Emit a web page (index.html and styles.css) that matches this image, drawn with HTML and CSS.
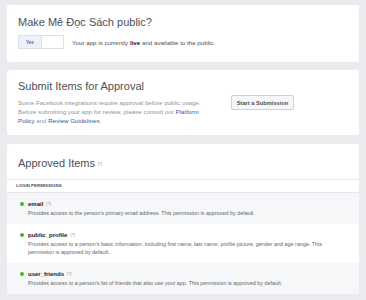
FILE: index.html
```html
<!DOCTYPE html>
<html lang="en">
<head>
    <meta charset="UTF-8">
    <title>App Review</title>
    <link rel="stylesheet" href="styles.css">
</head>
<body>
    <div class="page">
        <div class="card public">
            <h1 class="title">Make Mê Đọc Sách public?</h1>
            <div class="status">
                <div class="toggle">
                    <span class="yes">Yes</span>
                    <span class="no"></span>
                </div>
                <p class="note">Your app is currently <b>live</b> and available to the public.</p>
            </div>
        </div>

        <div class="card submit">
            <div class="submit-text">
                <h1 class="title">Submit Items for Approval</h1>
                <p class="desc">Some Facebook integrations require approval before public usage.<br>
                    Before submitting your app for review, please consult our <a href="#">Platform</a><br>
                    <a href="#">Policy</a> and <a href="#">Review Guidelines</a>.</p>
            </div>
            <button class="start">Start a Submission</button>
        </div>

        <div class="card approved">
            <div class="approved-head">
                <h1 class="title">Approved Items <span class="help">[?]</span></h1>
            </div>
            <div class="section">LOGIN PERMISSIONS</div>
            <div class="item grey">
                <div class="name"><span class="dot"></span>email <span class="help">[?]</span></div>
                <p class="item-desc">Provides access to the person's primary email address. This permission is approved by default.</p>
            </div>
            <div class="item">
                <div class="name"><span class="dot"></span>public_profile <span class="help">[?]</span></div>
                <p class="item-desc">Provides access to a person's basic information, including first name, last name, profile picture, gender and age range. This<br>
                    permission is approved by default.</p>
            </div>
            <div class="item grey">
                <div class="name"><span class="dot"></span>user_friends <span class="help">[?]</span></div>
                <p class="item-desc">Provides access to a person's list of friends that also use your app. This permission is approved by default.</p>
            </div>
        </div>
    </div>
</body>
</html>
```

FILE: styles.css
```css
body{
    margin:0;
    padding:0;
    background-color: #e9ebee;
    font-family: "Liberation Sans", Arial, sans-serif;
    color: #4b4f56;
}

.page{
    padding:5px 7px;
    display: flex;
    flex-direction: column;
}

.card{
    background-color: white;
    border-radius: 2px;
}

.title{
    margin:0;
    font-size: 11px;
    font-weight: normal;
    line-height: 13px;
    color: #4b4f56;
}

.public{
    padding:11px 11px 13px;
}
.status{
    display: flex;
    align-items: center;
    gap:8px;
    margin-top:6px;
}
.toggle{
    display: flex;
    box-sizing: border-box;
    width:46px;
    height:14px;
    border:1px solid #dddfe2;
}
.yes{
    width:22px;
    background-color: #edf1f8;
    color: #4267b2;
    font-size: 4.5px;
    font-weight: bold;
    display: flex;
    align-items: center;
    justify-content: center;
    border-right:1px solid #dddfe2;
}
.note{
    margin:0;
    font-size: 6.2px;
    color: #4b4f56;
}
.note b{
    color: #1d2129;
}

.submit{
    margin-top:8px;
    padding:10px 11px 10px;
    display: flex;
    align-items: center;
}
.submit-text{
    width:204px;
}
.desc{
    margin:5px 0 0;
    font-size: 6.2px;
    line-height: 9px;
    color: #90949c;
    white-space: nowrap;
}
.desc a{
    color: #365899;
    text-decoration: none;
}
.start{
    margin-left:9px;
    width:63px;
    height:15px;
    padding:0;
    background-color: #f6f7f9;
    border:1px solid #ced0d4;
    border-radius: 2px;
    font-family: "Liberation Sans", Arial, sans-serif;
    font-size: 5.7px;
    font-weight: bold;
    color: #4b4f56;
}

.approved{
    margin-top:9px;
    overflow: hidden;
}
.approved-head{
    padding:13px 11px 8px;
    border-bottom:1px solid #e5e6e9;
}
.help{
    font-size: 3.6px;
    font-weight: normal;
    color: #90949c;
    vertical-align: middle;
}
.section{
    padding:0 9px;
    height:12px;
    line-height: 12px;
    font-size: 4.4px;
    font-weight: bold;
    color: #4b4f56;
    border-bottom:1px solid #e5e6e9;
}
.item{
    padding:7px 20px 7px 13px;
}
.item.grey{
    background-color: #f6f7f9;
}
.name{
    display: flex;
    align-items: center;
    gap:3px;
    font-size: 6px;
    font-weight: bold;
    color: #1d2129;
    line-height: 8px;
}
.name .help{
    font-size: 4px;
}
.dot{
    width:4px;
    height:4px;
    border-radius: 50%;
    background-color: #42b72a;
    margin-right:1px;
}
.item-desc{
    margin:1px 0 0 8px;
    font-size: 5.4px;
    line-height: 8px;
    color: #616770;
    white-space: nowrap;
}
```
